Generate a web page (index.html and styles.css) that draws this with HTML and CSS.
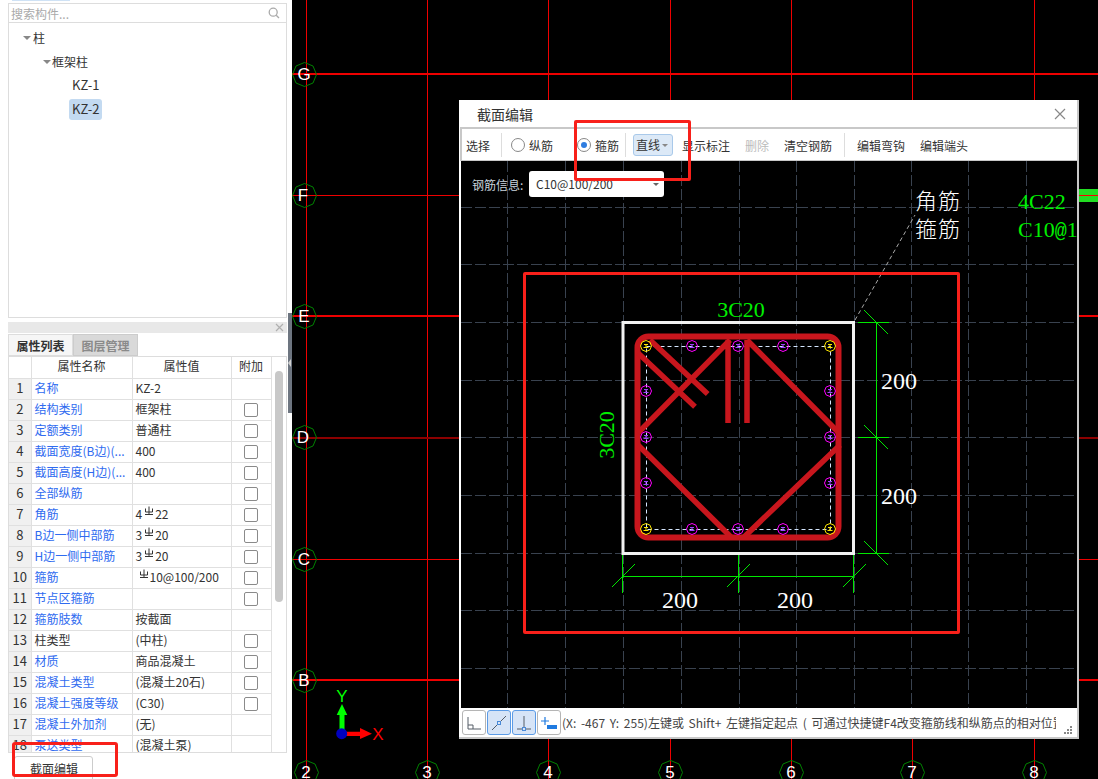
FILE: index.html
```html
<!DOCTYPE html>
<html lang="zh">
<head>
<meta charset="utf-8">
<title>截面编辑</title>
<link rel="stylesheet" href="styles.css">
</head>
<body>
<svg class="defs" width="0" height="0">
  <defs>
    <polygon id="bub" points="0,-12 8.500,-8.500 12,0 8.500,8.500 0,12 -8.500,8.500 -12,0 -8.500,-8.500"/>
    <g id="barm">
      <polygon class="bar-m" points="0,-5.500 3.900,-3.900 5.500,0 3.900,3.900 0,5.500 -3.900,3.900 -5.500,0 -3.900,-3.900"/>
      <path class="bar-mi" d="M-2-1.500H2M0-1.500V1.500M-2.500 1.500H2.500"/>
    </g>
    <g id="bary">
      <polygon class="bar-y" points="0,-5.500 3.900,-3.900 5.500,0 3.900,3.900 0,5.500 -3.900,3.900 -5.500,0 -3.900,-3.900"/>
      <path class="bar-yi" d="M-2-1.500H2M0-1.500V1.500M-2.500 1.500H2.500"/>
    </g>
    <symbol id="rebar" viewBox="0 0 10 10">
      <path class="rebar-s" d="M1.500 2.500V6H8.500V2.500M5 .5V8M1 8.500H9"/>
    </symbol>
  </defs>
</svg>

<aside class="side">
  <div class="side-top"><span class="side-top-sel"></span></div>
  <section class="tree-panel">
    <div class="search">
      <span class="search-text">搜索构件...</span>
      <svg class="search-ico" width="12" height="12" viewBox="0 0 12 12"><circle cx="5.200" cy="5.200" r="4"/><path d="M8.200 8.200L11 11"/></svg>
    </div>
    <ul class="tree">
      <li class="node lvl1"><span class="caret"></span>柱</li>
      <li class="node lvl2"><span class="caret"></span>框架柱</li>
      <li class="node lvl3"><span class="leaf">KZ-1</span></li>
      <li class="node lvl3"><span class="leaf leaf-sel">KZ-2</span></li>
    </ul>
  </section>
  <section class="prop-panel">
    <div class="prop-head"><svg width="9" height="9" viewBox="0 0 9 9"><path d="M1 1L8 8M8 1L1 8"/></svg></div>
    <div class="tabs"><span class="tab tab-on">属性列表</span><span class="tab">图层管理</span></div>
    <div class="table-wrap">
      <table class="props">
        <thead><tr><th class="c-n"></th><th class="c-name">属性名称</th><th class="c-val">属性值</th><th class="c-add">附加</th></tr></thead>
        <tbody>
          <tr><td class="c-n">1</td><td class="lnk">名称</td><td>KZ-2</td><td></td></tr>
          <tr><td class="c-n">2</td><td class="lnk">结构类别</td><td>框架柱</td><td><i class="chk"></i></td></tr>
          <tr><td class="c-n">3</td><td class="lnk">定额类别</td><td>普通柱</td><td><i class="chk"></i></td></tr>
          <tr><td class="c-n">4</td><td class="lnk">截面宽度(B边)(...</td><td>400</td><td><i class="chk"></i></td></tr>
          <tr><td class="c-n">5</td><td class="lnk">截面高度(H边)(...</td><td>400</td><td><i class="chk"></i></td></tr>
          <tr><td class="c-n">6</td><td class="lnk">全部纵筋</td><td></td><td><i class="chk"></i></td></tr>
          <tr><td class="c-n">7</td><td class="lnk">角筋</td><td>4<svg class="rb"><use href="#rebar"/></svg>22</td><td><i class="chk"></i></td></tr>
          <tr><td class="c-n">8</td><td class="lnk">B边一侧中部筋</td><td>3<svg class="rb"><use href="#rebar"/></svg>20</td><td><i class="chk"></i></td></tr>
          <tr><td class="c-n">9</td><td class="lnk">H边一侧中部筋</td><td>3<svg class="rb"><use href="#rebar"/></svg>20</td><td><i class="chk"></i></td></tr>
          <tr><td class="c-n">10</td><td class="lnk">箍筋</td><td><svg class="rb rb-first"><use href="#rebar"/></svg>10@100/200</td><td><i class="chk"></i></td></tr>
          <tr><td class="c-n">11</td><td class="lnk">节点区箍筋</td><td></td><td><i class="chk"></i></td></tr>
          <tr><td class="c-n">12</td><td class="lnk">箍筋肢数</td><td>按截面</td><td></td></tr>
          <tr><td class="c-n">13</td><td>柱类型</td><td>(中柱)</td><td><i class="chk"></i></td></tr>
          <tr><td class="c-n">14</td><td class="lnk">材质</td><td>商品混凝土</td><td><i class="chk"></i></td></tr>
          <tr><td class="c-n">15</td><td class="lnk">混凝土类型</td><td>(混凝土20石)</td><td><i class="chk"></i></td></tr>
          <tr><td class="c-n">16</td><td class="lnk">混凝土强度等级</td><td>(C30)</td><td><i class="chk"></i></td></tr>
          <tr><td class="c-n">17</td><td class="lnk">混凝土外加剂</td><td>(无)</td><td></td></tr>
          <tr><td class="c-n">18</td><td class="lnk">泵送类型</td><td>(混凝土泵)</td><td></td></tr>
        </tbody>
      </table>
      <div class="scroll"></div>
    </div>
    <div class="foot"><span class="btn">截面编辑</span></div>
  </section>
</aside>
<div class="splitter"><span class="split-arrow"></span></div>

<main class="cad">
  <svg class="cad-svg" width="806" height="779" viewBox="292 0 806 779">
    <g class="axis-v">
      <path d="M306.500 0V779M427.500 0V779M548.500 0V779M670.500 0V779M791.500 0V779M912.500 0V779M1034.500 0V779"/>
    </g>
    <g class="axis-h">
      <path d="M292 195.500H1098M292 559.500H1098"/>
      <path class="axis-thick" d="M292 74H1098M292 316H1098M292 680H1098"/>
      <path class="axis-dark" d="M292 438H1098"/>
    </g>
    <rect class="gbar" x="1079" y="189" width="19" height="13"/>
    <path class="axis-h-one" d="M1079 195.500H1098"/>
    <g class="bubble">
      <use href="#bub" x="304.500" y="74.500"/><use href="#bub" x="304.500" y="195.500"/><use href="#bub" x="304.500" y="316.500"/>
      <use href="#bub" x="304.500" y="437.500"/><use href="#bub" x="304.500" y="559.500"/><use href="#bub" x="304.500" y="680.500"/>
      <use href="#bub" x="306.500" y="772.500"/><use href="#bub" x="427.500" y="772.500"/><use href="#bub" x="548.500" y="772.500"/>
      <use href="#bub" x="670.500" y="772.500"/><use href="#bub" x="791.500" y="772.500"/><use href="#bub" x="912.500" y="772.500"/><use href="#bub" x="1034.500" y="772.500"/>
    </g>
    <g class="blabel">
      <text x="304" y="80">G</text><text x="303" y="201">F</text><text x="304" y="322">E</text>
      <text x="303" y="443">D</text><text x="304" y="565">C</text><text x="304" y="686">B</text>
      <text x="306" y="778">2</text><text x="427" y="778">3</text><text x="548" y="778">4</text>
      <text x="670" y="778">5</text><text x="791" y="778">6</text><text x="912" y="778">7</text><text x="1034" y="778">8</text>
    </g>
    <path class="ax-y" d="M339.500 715H344.500V733H339.500ZM336.700 715L342 704L347.300 715Z"/>
    <path class="ax-x" d="M342 731.700H360V728L372 733.700L360 739V736H342Z"/>
    <circle class="ax-o" cx="341.700" cy="733.700" r="5.500"/>
    <text class="ax-ly" x="342" y="702">Y</text>
    <text class="ax-lx" x="378" y="740">X</text>
  </svg>

  <div class="dialog">
    <header class="dlg-title">
      <span>截面编辑</span>
      <svg class="dlg-close" width="12" height="12" viewBox="0 0 12 12"><path d="M1 1L11 11M11 1L1 11"/></svg>
    </header>
    <div class="toolbar">
      <span class="tool t-sel">选择</span>
      <i class="sep sep1"></i>
      <span class="radio r1"></span><span class="tool t-zong">纵筋</span>
      <span class="radio radio-on r2"></span><span class="tool t-gu">箍筋</span>
      <i class="sep sep2"></i>
      <span class="combo">直线<i class="combo-caret"></i></span>
      <span class="tool t-show">显示标注</span>
      <span class="tool tool-off">删除</span>
      <span class="tool t-clear">清空钢筋</span>
      <i class="sep sep3"></i>
      <span class="tool t-hook">编辑弯钩</span>
      <span class="tool t-end">编辑端头</span>
    </div>
    <div class="canvas">
      <svg class="canvas-svg" width="616" height="547" viewBox="461 161 616 547">
        <g class="grid">
          <path d="M507.500 161V708M565.500 161V708M623.500 161V708M681.500 161V708M739.500 161V708M796.500 161V708M854.500 161V708M911.500 161V708M968.500 161V708M1026.500 161V708"/>
          <path d="M461 207.500H1077M461 264.500H1077M461 322.500H1077M461 380.500H1077M461 437.500H1077M461 495.500H1077M461 553.500H1077M461 610.500H1077M461 668.500H1077"/>
        </g>
        <path class="leader" d="M855 320L915 215"/>
        <rect class="column" x="623" y="322.500" width="230.500" height="231"/>
        <rect class="dashes" x="646.500" y="346.500" width="184" height="183"/>
        <g class="stirrup">
          <rect x="637.500" y="336.500" width="201" height="201" rx="11"/>
          <path d="M650 340L707.700 394M638 353L695 406.700M638 433L730 340M728 340V423M747 340V423M747 340L838 432M638 445L732 538M743 538L840 445"/>
        </g>
        <use href="#bary" x="646" y="346"/><use href="#barm" x="692" y="346"/><use href="#barm" x="738" y="346"/><use href="#barm" x="783" y="346"/><use href="#bary" x="830" y="346"/>
        <use href="#barm" x="646" y="391"/><use href="#barm" x="830" y="391"/>
        <use href="#barm" x="646" y="437"/><use href="#barm" x="830" y="437"/>
        <use href="#barm" x="646" y="483"/><use href="#barm" x="830" y="483"/>
        <use href="#bary" x="646" y="529"/><use href="#barm" x="692" y="529"/><use href="#barm" x="738" y="529"/><use href="#barm" x="783" y="529"/><use href="#bary" x="830" y="529"/>
        <g class="dim">
          <path d="M622.500 576.500H853.500M622.500 555V593M738.500 555V593M853.500 555V593M612 587L635 564M727 587L750 564M843 587L866 564"/>
          <path d="M876.500 322V553M858 322.500H889M858 437.500H889M858 553.500H889M864 310L888 334M864 425L888 449M864 541L888 565"/>
        </g>
        <text class="t-num" x="680" y="608">200</text>
        <text class="t-num" x="795" y="608">200</text>
        <text class="t-num" x="899" y="389">200</text>
        <text class="t-num" x="899" y="504">200</text>
        <text class="t-grn t-mid" x="741" y="317">3C20</text>
        <text class="t-grn t-mid t-rot" x="0" y="0">3C20</text>
        <text class="t-cjk" x="915" y="209">角筋</text>
        <text class="t-cjk" x="915" y="237">箍筋</text>
        <text class="t-grn" x="1018" y="209">4C22</text>
        <text class="t-grn" x="1018" y="237">C10<tspan class="t-at">@</tspan>100/200</text>
      </svg>
      <div class="rebar-info">
        <label class="info-lab">钢筋信息:</label>
        <div class="select">C10@100/200<i class="select-caret"></i></div>
      </div>
    </div>
    <footer class="status">
      <span class="sbtn">
        <svg width="22" height="22" viewBox="0 0 22 22"><path d="M5 5V17H18M5 13H10V17"/></svg>
      </span>
      <span class="sbtn sbtn-on">
        <svg width="22" height="22" viewBox="0 0 22 22"><path d="M4 18L18 4"/><rect class="mid" x="9.500" y="9.500" width="3" height="3"/></svg>
      </span>
      <span class="sbtn sbtn-on">
        <svg width="22" height="22" viewBox="0 0 22 22"><path d="M11 4V17M4 17H18"/><rect class="mid" x="9.500" y="15.500" width="3" height="3"/></svg>
      </span>
      <span class="sbtn">
        <svg width="22" height="22" viewBox="0 0 22 22"><path class="plus" d="M3 9H11M7 5V13"/><rect class="plusbar" x="9" y="13" width="10" height="4"/></svg>
      </span>
      <span class="status-text">(X: -467 Y: 255)左键或 Shift+ 左键指定起点 ( 可通过快捷键F4改变箍筋线和纵筋点的相对位置 )</span>
      <svg class="grip" width="9" height="9" viewBox="0 0 9 9"><path d="M6 0h2v2H6zM3 3h2v2H3zM6 3h2v2H6zM0 6h2v2H0zM3 6h2v2H3zM6 6h2v2H6z"/></svg>
    </footer>
  </div>
</main>

<div class="mark mark-a"></div>
<div class="mark mark-b"></div>
<div class="mark mark-c"></div>
</body>
</html>
```

FILE: styles.css
```css
* { box-sizing: border-box; }
html, body { margin: 0; height: 779px; overflow: hidden; }
body {
  position: relative;
  display: flex;
  width: 1098px;
  background: #000;
  font-family: "Noto Sans CJK SC", "Noto Sans", sans-serif;
  font-size: 12px;
  color: #333;
}
.defs { position: absolute; }

/* Sidebar */
.side {
  width: 292px;
  height: 779px;
  flex: none;
  overflow: hidden;
  background: #fff;
  padding: 0 5px 0 8px;
}
.side-top { height: 3px; }
.side-top-sel { display: block; width: 58px; height: 1px; margin-left: 4px; background: #cfe2f5; }
.tree-panel {
  height: 315px;
  border: 1px solid #ddd;
}
.search {
  height: 19px;
  display: flex;
  align-items: center;
  justify-content: space-between;
  padding: 0 6px 0 2px;
  border-bottom: 1px solid #ddd;
}
.search-text { color: #aaa; line-height: 19px; }
.search-ico { fill: none; stroke: #aaa; stroke-width: 1.3; }
.tree { list-style: none; margin: 0; padding: 3px 0 0; }
.node { height: 24px; line-height: 24px; display: flex; align-items: center; color: #333; }
.lvl1 { padding-left: 14px; }
.lvl2 { padding-left: 34px; }
.lvl2 .caret { margin-right: 1px; }
.lvl3 { padding-left: 60px; }
.caret {
  width: 0; height: 0;
  margin-right: 2px;
  border-left: 4px solid transparent;
  border-right: 4px solid transparent;
  border-top: 4px solid #888;
}
.leaf {
  padding: 0 3px;
  line-height: 20px;
  height: 21px;
  margin-top: -2px;
  border-radius: 3px;
  font-size: 13px;
}
.leaf-sel { background: #c3daf1; }

.prop-panel { margin-top: 4px; }
.prop-head {
  height: 11px;
  background: #e8e8e8;
  display: flex;
  justify-content: flex-end;
  align-items: center;
  padding-right: 3px;
}
.prop-head svg { fill: none; stroke: #b0b0b0; stroke-width: 1.2; }
.tabs { display: flex; height: 24px; padding-top: 1px; border-bottom: 1px solid #ddd; }
.tab {
  width: 65px;
  text-align: center;
  line-height: 21px;
  font-weight: 700;
  color: #8a8a8a;
  background: #d9d9d9;
  border: 1px solid #ccc;
}
.tab-on { background: #f6f6f6; color: #333; border-color: #ddd; }
.table-wrap {
  position: relative;
  height: 396px;
  overflow: hidden;
  border-left: 1px solid #ddd;
  border-right: 1px solid #ddd;
  border-bottom: 1px solid #ddd;
}
.props { border-collapse: collapse; table-layout: fixed; width: 262px; }
.props th, .props td {
  height: 21px;
  padding: 0 0 2px 3px;
  border: 1px solid #e0e0e0;
  font-weight: 400;
  line-height: 18px;
  white-space: nowrap;
  overflow: hidden;
}
.props tr > :first-child { border-left: 0; }
.props thead th { border-top: 0; text-align: center; padding: 0 0 2px; }
.c-n { width: 22px; }
.c-name { width: 101px; }
.c-val { width: 99px; }
.c-add { width: 40px; }
.props td.c-n { background: #f0f0f0; text-align: center; padding: 0 0 2px; font-size: 13px; }
.props td.lnk { color: #2f6bf0; }
.props td:last-child { text-align: center; padding: 0; }
.chk {
  display: inline-block;
  width: 14px; height: 14px;
  margin-top: 2px;
  vertical-align: top;
  background: #fff;
  border: 1px solid #8a8a8a;
  border-radius: 2px;
}
.rb { width: 10px; height: 10px; margin: 0 1px 0 2px; vertical-align: 3px; }
.rb-first { margin-left: 3px; }
.rebar-s { fill: none; stroke: #333; stroke-width: 1; }
.scroll {
  position: absolute;
  top: 14px;
  right: 3px;
  width: 8px;
  height: 231px;
  border-radius: 4px;
  background: #c8c8c8;
}
.foot { padding: 3px 0 0 6px; }
.btn {
  display: block;
  width: 79px;
  height: 26px;
  line-height: 24px;
  padding-left: 1px;
  text-align: center;
  border: 1px solid #ccc;
  border-radius: 3px;
  color: #333;
}
.splitter {
  position: absolute;
  left: 288px;
  top: 313px;
  width: 4px;
  height: 100px;
  background: #6d7580;
  display: flex;
  align-items: center;
}
.split-arrow {
  width: 0; height: 0;
  border-top: 4px solid transparent;
  border-bottom: 4px solid transparent;
  border-right: 3px solid #d0d0d0;
}

/* CAD view */
.cad { position: relative; flex: 1; height: 779px; overflow: hidden; }
.cad-svg { display: block; }
.axis-v path { stroke: #ee0000; stroke-width: 1; fill: none; }
.axis-h path { stroke: #ee0000; stroke-width: 1; fill: none; }
.axis-h .axis-thick { stroke-width: 2; }
.axis-h .axis-dark { stroke: #8c0000; stroke-width: 2; }
.axis-h-one { stroke: #ff0000; stroke-width: 1; }
.gbar { fill: #22dd22; }
.bubble use { fill: none; stroke: #008000; stroke-width: 1; }
.blabel text { fill: #fff; font-family: "Liberation Sans", sans-serif; font-size: 17px; text-anchor: middle; }
.ax-y { fill: #00ff00; }
.ax-x { fill: #ff0000; }
.ax-o { fill: #0000c0; }
.ax-ly, .ax-lx { font-family: "Liberation Sans", sans-serif; font-size: 17px; text-anchor: middle; }
.ax-ly { fill: #00ff00; }
.ax-lx { fill: #ff0000; }

/* Dialog */
.dialog {
  position: absolute;
  left: 167px;
  top: 100px;
  width: 620px;
  height: 639px;
  background: #fff;
  border-right: 2px solid #c8c8c8;
  border-bottom: 2px solid #c8c8c8;
  display: flex;
  flex-direction: column;
}
.dlg-title {
  height: 27px;
  flex: none;
  display: flex;
  align-items: center;
  justify-content: space-between;
  padding: 0 11px 0 18px;
  font-size: 14px;
  color: #333;
  background: #fff;
}
.dlg-close { fill: none; stroke: #888; stroke-width: 1.2; }
.toolbar {
  height: 34px;
  flex: none;
  margin-left: 1px;
  display: flex;
  align-items: center;
  background: #fff;
  border-top: 2px solid #c8c8c8;
  border-left: 2px solid #c8c8c8;
  border-bottom: 1px solid #c8c8c8;
  color: #333;
}
.tool { white-space: nowrap; line-height: 17px; padding-top: 1px; }
.tool-off { color: #bbb; margin-left: 15px; }
.t-sel { margin-left: 4px; }
.sep { width: 1px; height: 24px; background: #ddd; flex: none; }
.sep1 { margin-left: 11px; }
.sep2 { margin-left: 6px; }
.sep3 { margin-left: 12px; }
.radio {
  width: 14px; height: 14px;
  flex: none;
  border: 1px solid #888;
  border-radius: 50%;
  background: #fff;
}
.r1 { margin-left: 9px; }
.r2 { margin-left: 24px; position: relative; }
.radio-on { border-color: #888; }
.radio-on::after {
  content: "";
  position: absolute;
  left: 3px; top: 3px;
  width: 6px; height: 6px;
  border-radius: 50%;
  background: #2f7de0;
}
.t-zong { margin-left: 4px; }
.t-gu { margin-left: 4px; }
.combo {
  margin-left: 7px;
  width: 40px;
  height: 22px;
  line-height: 20px;
  padding-left: 2px;
  background: #dce9f7;
  border: 1px solid #a9c9ea;
  border-radius: 3px;
  position: relative;
}
.combo-caret {
  position: absolute;
  right: 4px; top: 9px;
  border-left: 3px solid transparent;
  border-right: 3px solid transparent;
  border-top: 3px solid #888;
}
.t-show { margin-left: 9px; }
.t-clear { margin-left: 15px; }
.t-hook { margin-left: 12px; }
.t-end { margin-left: 15px; }
.canvas {
  position: relative;
  height: 547px;
  flex: none;
  margin-left: 2px;
  background: #000;
  overflow: hidden;
}
.canvas-svg { display: block; }
.grid path { stroke: #39424f; stroke-width: 1; stroke-dasharray: 11 3; fill: none; }
.leader { stroke: #aaa; stroke-width: 1; stroke-dasharray: 4 3; fill: none; }
.column { fill: none; stroke: #f2f2f2; stroke-width: 3; }
.dashes { fill: none; stroke: #d4e6ff; stroke-width: 1; stroke-dasharray: 4 3; }
.stirrup rect { fill: none; stroke: #c8161d; stroke-width: 6; }
.stirrup path { fill: none; stroke: #c8161d; stroke-width: 5.500; }
.bar-m { fill: none; stroke: #ff00ff; stroke-width: 1; }
.bar-y { fill: none; stroke: #ffe800; stroke-width: 1; }
.bar-mi { fill: none; stroke: #a040ff; stroke-width: 1; }
.bar-yi { fill: none; stroke: #ffe800; stroke-width: 1; }
.dim path { fill: none; stroke: #00e800; stroke-width: 1; }
.t-num { fill: #fff; font-family: "Liberation Serif", serif; font-size: 24px; text-anchor: middle; }
.t-grn { fill: #00f000; font-family: "Liberation Serif", serif; font-size: 22px; }
.t-at { font-family: "Liberation Mono", monospace; font-size: 20px; }
.t-mid { text-anchor: middle; }
.t-rot { transform: translate(614px, 435px) rotate(-90deg); }
.t-cjk { fill: #fff; font-family: "Noto Sans CJK SC", sans-serif; font-weight: 300; font-size: 22px; letter-spacing: 1px; }
.rebar-info {
  position: absolute;
  left: 11px;
  top: 10px;
  display: flex;
  align-items: center;
}
.info-lab { color: #c9d3dd; width: 57px; }
.select {
  position: relative;
  width: 135px;
  height: 26px;
  line-height: 26px;
  padding-left: 7px;
  background: #fff;
  border-radius: 3px;
  color: #333;
}
.select-caret {
  position: absolute;
  right: 5px; top: 12px;
  border-left: 3px solid transparent;
  border-right: 3px solid transparent;
  border-top: 3px solid #666;
}
.status {
  position: relative;
  flex: 1;
  min-height: 0;
  display: flex;
  align-items: center;
  gap: 1px;
  padding: 0 0 0 3px;
  overflow: hidden;
  background: #fff;
}
.sbtn {
  width: 24px;
  height: 25px;
  flex: none;
  display: flex;
  align-items: center;
  justify-content: center;
  background: #fff;
  border: 1px solid #b5b5b5;
  border-radius: 3px;
}
.sbtn svg { fill: none; stroke: #555c66; stroke-width: 1; }
.sbtn-on { background: #d6e4f7; border-color: #5b9be6; }
.sbtn .mid { fill: #d6e4f7; stroke: #4a8ad8; }
.sbtn .plus { stroke: #1f7ae0; stroke-width: 1.2; }
.sbtn .plusbar { fill: #1f7ae0; stroke: none; }
.status-text {
  width: 494px;
  flex: none;
  overflow: hidden;
  white-space: nowrap;
  word-spacing: 2px;
  color: #444;
}
.grip { position: absolute; right: 4px; bottom: 2px; fill: #888; }

/* Hand-drawn annotation boxes over the screenshot */
.mark {
  position: absolute;
  border: 3px solid #f8201a;
  border-radius: 2px;
  pointer-events: none;
}
.mark-a { left: 574px; top: 120px; width: 117px; height: 61px; }
.mark-b { left: 523px; top: 272px; width: 437px; height: 362px; }
.mark-c { left: 12px; top: 742px; width: 106px; height: 35px; border-radius: 3px; }
```
